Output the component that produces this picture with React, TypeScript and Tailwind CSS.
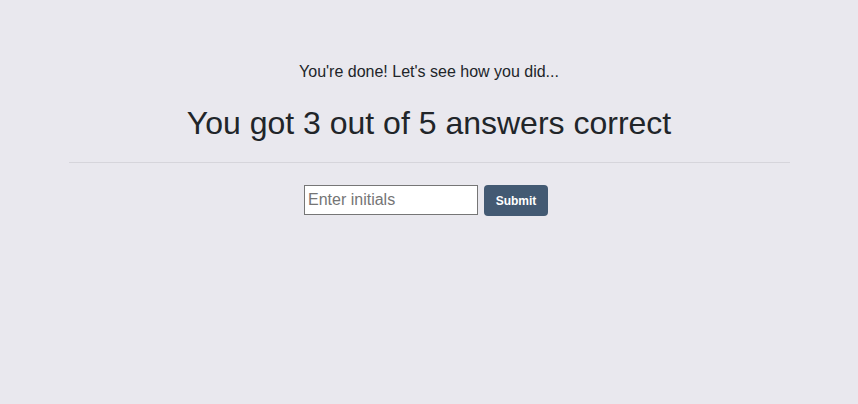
export default function App() {
  return (
    <div className="min-h-[404px] w-full bg-[#e9e8ee] text-[#212529] font-['Liberation_Sans',Arial,sans-serif]">
      <div className="mx-auto w-[721px] pt-[60px] text-center">
        <p className="text-base leading-6">You're done! Let's see how you did...</p>
        <h1 className="mt-5 text-[32px] leading-[38px]">You got 3 out of 5 answers correct</h1>
        <hr className="mt-[20px] border-t border-[#d6d5db]" />
        <form className="mt-[22px] flex items-start justify-center gap-[6px] pr-[6px]" onSubmit={(e) => e.preventDefault()}>
          <input
            type="text"
            placeholder="Enter initials"
            className="h-[30px] w-[174px] border border-[#767676] bg-white px-[3px] text-base placeholder:text-[#757575]"
          />
          <button className="h-[31px] w-[64px] rounded bg-[#435a73] text-xs font-bold text-white">
            Submit
          </button>
        </form>
      </div>
    </div>
  );
}
